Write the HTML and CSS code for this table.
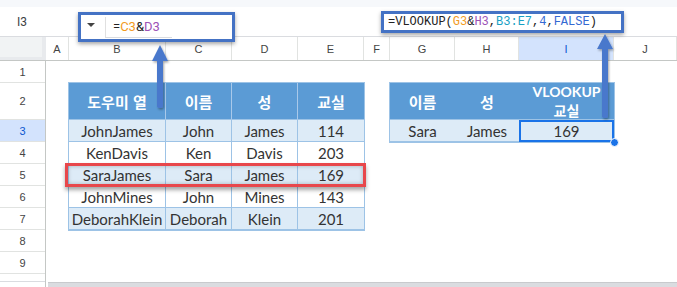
FILE: index.html
```html
<!DOCTYPE html>
<html lang="ko">
<head>
<meta charset="utf-8">
<link rel="stylesheet" href="styles.css">
</head>
<body>
<div class="app">
  <div class="topstrip"></div>
  <div class="fbar"><div class="namebox">I3</div></div>
  <div class="colhead">
    <div class="corner"></div>
    <div class="ch">A</div><div class="ch">B</div><div class="ch">C</div><div class="ch">D</div><div class="ch">E</div>
    <div class="ch">F</div><div class="ch">G</div><div class="ch">H</div><div class="ch ch-sel">I</div><div class="ch">J</div>
  </div>
  <div class="main">
    <div class="rowheads">
      <div class="rh">1</div>
      <div class="rh rh-tall">2</div>
      <div class="rh rh-sel">3</div>
      <div class="rh">4</div>
      <div class="rh">5</div>
      <div class="rh">6</div>
      <div class="rh">7</div>
      <div class="rh">8</div>
      <div class="rh">9</div>
      <div class="rh rh-part"></div>
    </div>
    <div class="sheet">
      <div class="t1">
        <div class="c hd">도우미 열</div><div class="c hd">이름</div><div class="c hd">성</div><div class="c hd e">교실</div>
        <div class="c band">JohnJames</div><div class="c band">John</div><div class="c band">James</div><div class="c band e">114</div>
        <div class="c">KenDavis</div><div class="c">Ken</div><div class="c">Davis</div><div class="c e">203</div>
        <div class="c band">SaraJames</div><div class="c band">Sara</div><div class="c band">James</div><div class="c band e">169</div>
        <div class="c">JohnMines</div><div class="c">John</div><div class="c">Mines</div><div class="c e">143</div>
        <div class="c band">DeborahKlein</div><div class="c band">Deborah</div><div class="c band">Klein</div><div class="c band e">201</div>
      </div>
      <div class="t2">
        <div class="c hd nb">이름</div><div class="c hd nb">성</div><div class="c hd nb two"><span class="l1">VLOOKUP</span><span class="l2">교실</span></div>
        <div class="c band nb">Sara</div><div class="c band nb">James</div><div class="c band nb sel">169<span class="handle"></span></div>
      </div>
      <div class="redbox"></div>
    </div>
  </div>
  <div class="scrollrow"><div class="scrollleft"></div><div class="scrollbar"></div></div>

  <div class="fbox1">
    <span class="tri"></span>
    <div class="fcell"><span class="k">=</span><span class="o">C3</span><span class="k">&amp;</span><span class="p">D3</span></div>
  </div>
  <div class="fbox2"><span class="k">=VLOOKUP(</span><span class="o">G3</span><span class="k">&amp;</span><span class="p">H3</span><span class="k">,</span><span class="cy">B3:E7</span><span class="k">,</span><span class="bl">4</span><span class="k">,</span><span class="bl">FALSE</span><span class="k">)</span></div>

  <svg class="arrows" width="677" height="287" viewBox="0 0 677 287">
    <defs>
      <filter id="sh" x="-50%" y="-20%" width="200%" height="140%">
        <feDropShadow dx="1" dy="1.5" stdDeviation="1.2" flood-color="#000" flood-opacity="0.35"/>
      </filter>
    </defs>
    <g filter="url(#sh)">
      <path d="M160 45 L168 61 L163 61 L163 106 Q163 108 160 108 Q157 108 157 106 L157 61 L152 61 Z" fill="#4a78cc"/>
      <path d="M605 34 L613 49 L608 49 L608 116 Q608 118 605 118 Q602 118 602 116 L602 49 L597 49 Z" fill="#4a78cc"/>
    </g>
  </svg>
</div>
</body>
</html>
```
FILE: styles.css
```css
* { box-sizing: border-box; margin: 0; padding: 0; }
body { margin: 0; width: 677px; height: 287px; overflow: hidden; background: #fff; font-family: Roboto, "Noto Sans CJK KR", sans-serif; }
.app { position: relative; width: 677px; height: 287px; overflow: hidden; background: #fff; }
.topstrip { height: 7px; background: #f6f8fb; }
.fbar { height: 30px; display: flex; align-items: center; border-bottom: 1px solid #dadce0; }
.namebox { width: 46px; padding-left: 17px; font-size: 12px; color: #3c4043; }

.colhead { display: grid; grid-template-columns: 46px 23px 97px 66px 66px 66px 26px 65px 64px 95px 1fr; height: 24px; border-bottom: 1px solid #c4c7c5; }
.corner { background: #f1f3f4; border-right: 4px solid #e8eaed; border-bottom: 3px solid #e8eaed; }
.ch { display: flex; align-items: center; justify-content: center; border-right: 1px solid #e1e3e1; font-family: "Liberation Sans", Arial, sans-serif; font-size: 11px; color: #444; }
.ch-sel { background: #d3e3fd; color: #0b57d0; }

.main { display: flex; }
.rowheads { width: 46px; display: flex; flex-direction: column; border-right: 1px solid #c4c7c5; }
.rh { height: 22px; display: flex; align-items: center; justify-content: center; border-bottom: 1px solid #e1e3e1; font-family: "Liberation Sans", Arial, sans-serif; font-size: 11px; color: #444; }
.rh-tall { height: 37px; }
.rh-sel { background: #d3e3fd; color: #0b57d0; }
.rh-part { height: 8px; border-bottom: 1px solid #dadce0; }

.sheet { flex: 1; display: grid; grid-template-columns: 23px 97px 66px 66px 66px 26px 65px 64px 95px 1fr; grid-template-rows: 22px 37px repeat(7, 22px) 8px; }

.t1 { grid-column: 2 / 6; grid-row: 2 / 8; display: grid; grid-template-columns: 97px 66px 66px 66px; grid-template-rows: 37px repeat(5, 22px); outline: 1px solid #9dc3e6; }
.t2 { grid-column: 7 / 10; grid-row: 2 / 4; display: grid; grid-template-columns: 65px 64px 95px; grid-template-rows: 37px 22px; outline: 1px solid #9dc3e6; }

.c { display: flex; align-items: center; justify-content: center; border-right: 1px solid #9dc3e6; border-bottom: 1px solid #9dc3e6; font-family: Lato, "Noto Sans CJK KR", sans-serif; font-size: 15px; color: #333; white-space: nowrap; overflow: visible; }
.c.e { border-right: none; }
.c.nb { border-right: none; }
.hd { background: #5b9bd5; color: #fff; font-weight: bold; font-family: "Noto Sans CJK KR", Lato, sans-serif; font-size: 15px; border-right-color: #a9c9ea; }
.two { flex-direction: column; justify-content: flex-start; }
.l1 { display: block; height: 17px; line-height: 17px; font-family: Lato, sans-serif; font-size: 14px; }
.l2 { display: block; height: 19px; line-height: 20px; font-family: "Noto Sans CJK KR", sans-serif; font-size: 14px; }
.band { background: #ddebf7; }
.sel { position: relative; box-shadow: inset 0 0 0 2px #1a73e8; border-bottom: none; }
.handle { position: absolute; right: -5px; bottom: -5px; width: 9px; height: 9px; border-radius: 50%; background: #1a73e8; border: 1px solid #fff; }

.redbox { grid-column: 1 / 7; grid-row: 5; margin: -1px 24px -1px 19px; border: 3px solid #e8474b; box-shadow: 0 3px 4px rgba(0,0,0,0.35), inset 0 0 4px rgba(0,0,0,0.25); z-index: 2; }

.scrollrow { display: flex; height: 5px; }
.scrollleft { width: 46px; border-right: 1px solid #c4c7c5; }
.scrollbar { flex: 1; margin-left: 2px; background: #dadce0; border-top: 1px solid #c8cacd; }

.fbox1 { position: absolute; left: 78px; top: 12px; width: 157px; height: 30px; border: 3px solid #4472c4; background: #fff; box-shadow: 0 2px 4px rgba(0,0,0,0.35); display: flex; align-items: stretch; z-index: 5; }
.tri { align-self: center; margin: 0 10px 4px 6px; width: 0; height: 0; border-left: 4px solid transparent; border-right: 4px solid transparent; border-top: 4px solid #444; }
.fcell { width: 67px; margin: 2px 0 1px 0; border-left: 1px solid #e0e0e0; border-bottom: 1px solid #dadce0; padding: 0 0 2px 7px; display: flex; align-items: center; font-family: Roboto, "Liberation Sans", sans-serif; font-size: 13px; }
.fbox2 { position: absolute; left: 381px; top: 11px; width: 243px; height: 22px; border: 3px solid #4472c4; background: #fff; box-shadow: 0 2px 4px rgba(0,0,0,0.35); display: flex; align-items: center; padding-left: 4px; font-family: "Liberation Mono", "DejaVu Sans Mono", monospace; font-size: 12px; z-index: 5; }
.k { color: #222; }
.o { color: #f29b1e; }
.p { color: #9c52b6; }
.cy { color: #18a0c4; }
.bl { color: #3469d2; }

.arrows { position: absolute; left: 0; top: 0; z-index: 6; pointer-events: none; }
```
